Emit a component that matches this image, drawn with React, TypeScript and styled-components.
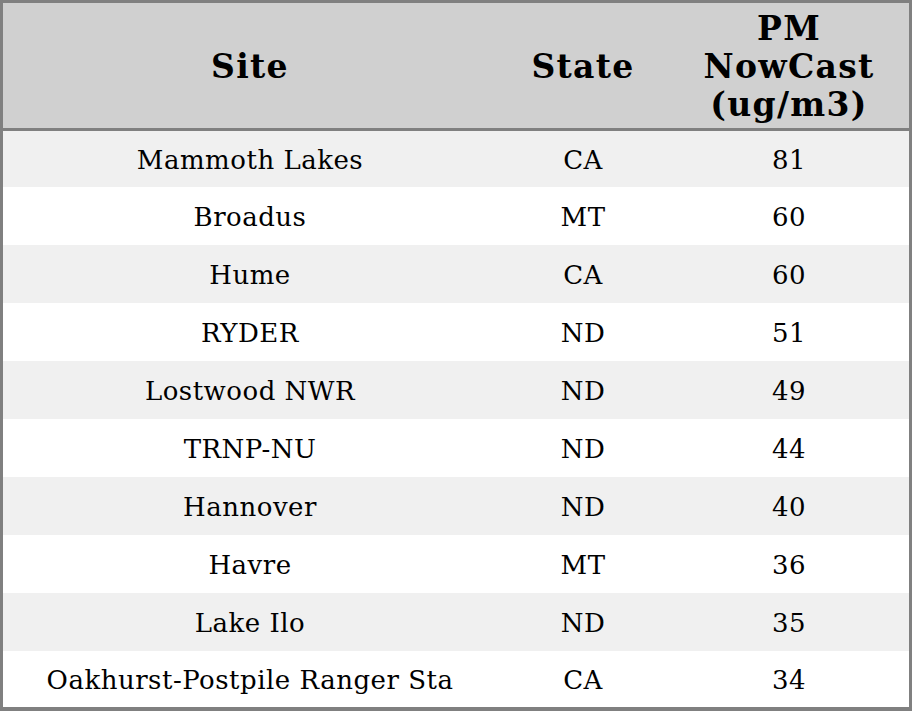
import styled, { createGlobalStyle } from "styled-components";

const GlobalStyle = createGlobalStyle`
  html, body {
    margin: 0;
    padding: 0;
    background: #ffffff;
  }
  body {
    font-family: "DejaVu Serif", "Liberation Serif", serif;
    color: #000;
  }
`;

const Table = styled.table`
  width: 912px;
  border-collapse: separate;
  border-spacing: 0;
  border: 3px solid #808080;
  border-bottom-width: 4px;
  table-layout: fixed;
  font-family: "DejaVu Serif", "Liberation Serif", serif;
`;

const HeadCell = styled.th`
  box-sizing: border-box;
  background-color: #d0d0d0;
  height: 128px;
  padding: 2px 4px 0;
  border-bottom: 3px solid #808080;
  font-size: 33px;
  font-weight: bold;
  line-height: 38px;
  letter-spacing: 1.3px;
  text-align: center;
  vertical-align: middle;
`;

const Row = styled.tr<{ $striped: boolean }>`
  height: 58px;
  background-color: ${(p) => (p.$striped ? "#f0f0f0" : "#ffffff")};
  &:first-child,
  &:last-child {
    height: 56px;
  }
`;

const Cell = styled.td`
  padding: 2px 0 0;
  font-size: 26px;
  letter-spacing: 0.5px;
  text-align: center;
  vertical-align: middle;
  white-space: nowrap;
`;

interface ISite {
  site: string;
  state: string;
  pm: number;
}

const sites: ISite[] = [
  { site: "Mammoth Lakes", state: "CA", pm: 81 },
  { site: "Broadus", state: "MT", pm: 60 },
  { site: "Hume", state: "CA", pm: 60 },
  { site: "RYDER", state: "ND", pm: 51 },
  { site: "Lostwood NWR", state: "ND", pm: 49 },
  { site: "TRNP-NU", state: "ND", pm: 44 },
  { site: "Hannover", state: "ND", pm: 40 },
  { site: "Havre", state: "MT", pm: 36 },
  { site: "Lake Ilo", state: "ND", pm: 35 },
  { site: "Oakhurst-Postpile Ranger Sta", state: "CA", pm: 34 },
];

export default function App() {
  return (
    <>
      <GlobalStyle />
      <Table>
        <colgroup>
          <col style={{ width: 494 }} />
          <col style={{ width: 172 }} />
          <col style={{ width: 240 }} />
        </colgroup>
        <thead>
          <tr>
            <HeadCell>Site</HeadCell>
            <HeadCell>State</HeadCell>
            <HeadCell>
              PM
              <br />
              NowCast
              <br />
              (ug/m3)
            </HeadCell>
          </tr>
        </thead>
        <tbody>
          {sites.map((s, i) => (
            <Row key={s.site} $striped={i % 2 === 0}>
              <Cell>{s.site}</Cell>
              <Cell>{s.state}</Cell>
              <Cell>{s.pm}</Cell>
            </Row>
          ))}
        </tbody>
      </Table>
    </>
  );
}
